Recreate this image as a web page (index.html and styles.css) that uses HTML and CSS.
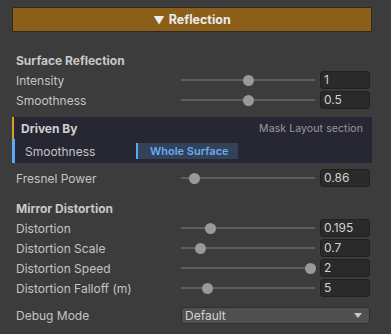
FILE: index.html
```html
<!DOCTYPE html>
<html>
<head>
<meta charset="utf-8">
<link rel="stylesheet" href="styles.css">
</head>
<body>
<div class="inspector">
  <div class="header"><span class="tri">▼</span> Reflection</div>

  <div class="section first">Surface Reflection</div>
  <div class="row">
    <div class="label">Intensity</div>
    <div class="slider"><div class="track"></div><div class="thumb" style="left:50%"></div></div>
    <div class="field">1</div>
  </div>
  <div class="row">
    <div class="label">Smoothness</div>
    <div class="slider"><div class="track"></div><div class="thumb" style="left:50%"></div></div>
    <div class="field">0.5</div>
  </div>

  <div class="panel">
    <div class="panel-head">
      <span class="panel-title">Driven By</span>
      <span class="panel-note">Mask Layout section</span>
    </div>
    <div class="panel-row">
      <span class="panel-label">Smoothness</span>
      <span class="chip">Whole Surface</span>
    </div>
  </div>

  <div class="row fresnel">
    <div class="label">Fresnel Power</div>
    <div class="slider"><div class="track"></div><div class="thumb" style="left:7%"></div></div>
    <div class="field">0.86</div>
  </div>

  <div class="section second">Mirror Distortion</div>
  <div class="row">
    <div class="label">Distortion</div>
    <div class="slider"><div class="track"></div><div class="thumb" style="left:19.5%"></div></div>
    <div class="field">0.195</div>
  </div>
  <div class="row">
    <div class="label">Distortion Scale</div>
    <div class="slider"><div class="track"></div><div class="thumb" style="left:12%"></div></div>
    <div class="field">0.7</div>
  </div>
  <div class="row">
    <div class="label">Distortion Speed</div>
    <div class="slider"><div class="track"></div><div class="thumb" style="left:100%"></div></div>
    <div class="field">2</div>
  </div>
  <div class="row">
    <div class="label">Distortion Falloff (m)</div>
    <div class="slider"><div class="track"></div><div class="thumb" style="left:17%"></div></div>
    <div class="field">5</div>
  </div>

  <div class="row debug">
    <div class="label">Debug Mode</div>
    <div class="dropdown"><span>Default</span><span class="arrow"></span></div>
  </div>
</div>
</body>
</html>
```
FILE: styles.css
```css
html, body {
  margin: 0;
  padding: 0;
  background: #3c3c3c;
}
body {
  font-family: Inter, "Noto Sans", "Liberation Sans", sans-serif;
  font-size: 12px;
  color: #c4c4c4;
}
.inspector {
  width: 360px;
  padding: 7px 0 0 12px;
  display: flex;
  flex-direction: column;
}
.header {
  height: 23px;
  background: #8b5e1a;
  border: 1px solid #2e2a22;
  border-radius: 1px;
  color: #ececec;
  font-weight: 700;
  font-size: 12.5px;
  display: flex;
  align-items: center;
  justify-content: center;
  gap: 4px;
}
.tri {
  font-size: 11px;
}
.section {
  height: 20px;
  display: flex;
  align-items: center;
  padding-left: 4px;
  font-weight: 700;
  color: #c8c8c8;
}
.section.first {
  margin-top: 18px;
}
.section.second {
  margin-top: 10px;
}
.row {
  height: 20px;
  display: flex;
  align-items: center;
  padding-left: 4px;
  padding-right: 2px;
}
.label {
  width: 165px;
  flex: none;
  white-space: nowrap;
}
.slider {
  position: relative;
  width: 124px;
  margin: 0 5px;
  height: 20px;
  flex: none;
}
.track {
  position: absolute;
  left: -5px;
  right: -5px;
  top: 9px;
  height: 2px;
  background: #5e5e5e;
}
.thumb {
  position: absolute;
  top: 5px;
  width: 11px;
  height: 11px;
  margin-left: -5.5px;
  border-radius: 50%;
  background: #999999;
}
.field {
  margin-left: 5px;
  width: 46px;
  height: 16px;
  background: #2a2a2a;
  border: 1px solid #212121;
  border-radius: 3px;
  padding-left: 3px;
  line-height: 16px;
  color: #d2d2d2;
}
.panel {
  margin-top: 7px;
  background: #272733;
  display: flex;
  flex-direction: column;
}
.panel-head {
  height: 22px;
  border-left: 2px solid #d4a020;
  display: flex;
  align-items: center;
  justify-content: space-between;
  padding: 0 9px 0 7px;
}
.panel-title {
  font-weight: 700;
  color: #d0d0d0;
}
.panel-note {
  font-size: 10.5px;
  letter-spacing: 0.1px;
  color: #9a9a9a;
}
.panel-row {
  height: 24px;
  border-left: 3px solid #5aaaf0;
  display: flex;
  align-items: center;
  padding-left: 10px;
}
.panel-label {
  width: 111px;
  color: #c4c4c4;
}
.chip {
  height: 16px;
  background: #33425a;
  border-left: 2px solid #5aaaf0;
  color: #66aef0;
  font-weight: 600;
  font-size: 11px;
  display: flex;
  align-items: center;
  padding-left: 12px;
  box-sizing: border-box;
  width: 102px;
}
.row.fresnel {
  margin-top: 5px;
}
.row.debug {
  margin-top: 7px;
}
.dropdown {
  height: 15px;
  background: #505050;
  border: 1px solid #2e2e2e;
  border-radius: 3px;
  display: flex;
  align-items: center;
  justify-content: space-between;
  padding: 0 7px 0 3px;
  box-sizing: content-box;
  width: 178px;
  color: #d0d0d0;
}
.arrow {
  width: 0;
  height: 0;
  border-left: 4.5px solid transparent;
  border-right: 4.5px solid transparent;
  border-top: 5px solid #c8c8c8;
}
```
